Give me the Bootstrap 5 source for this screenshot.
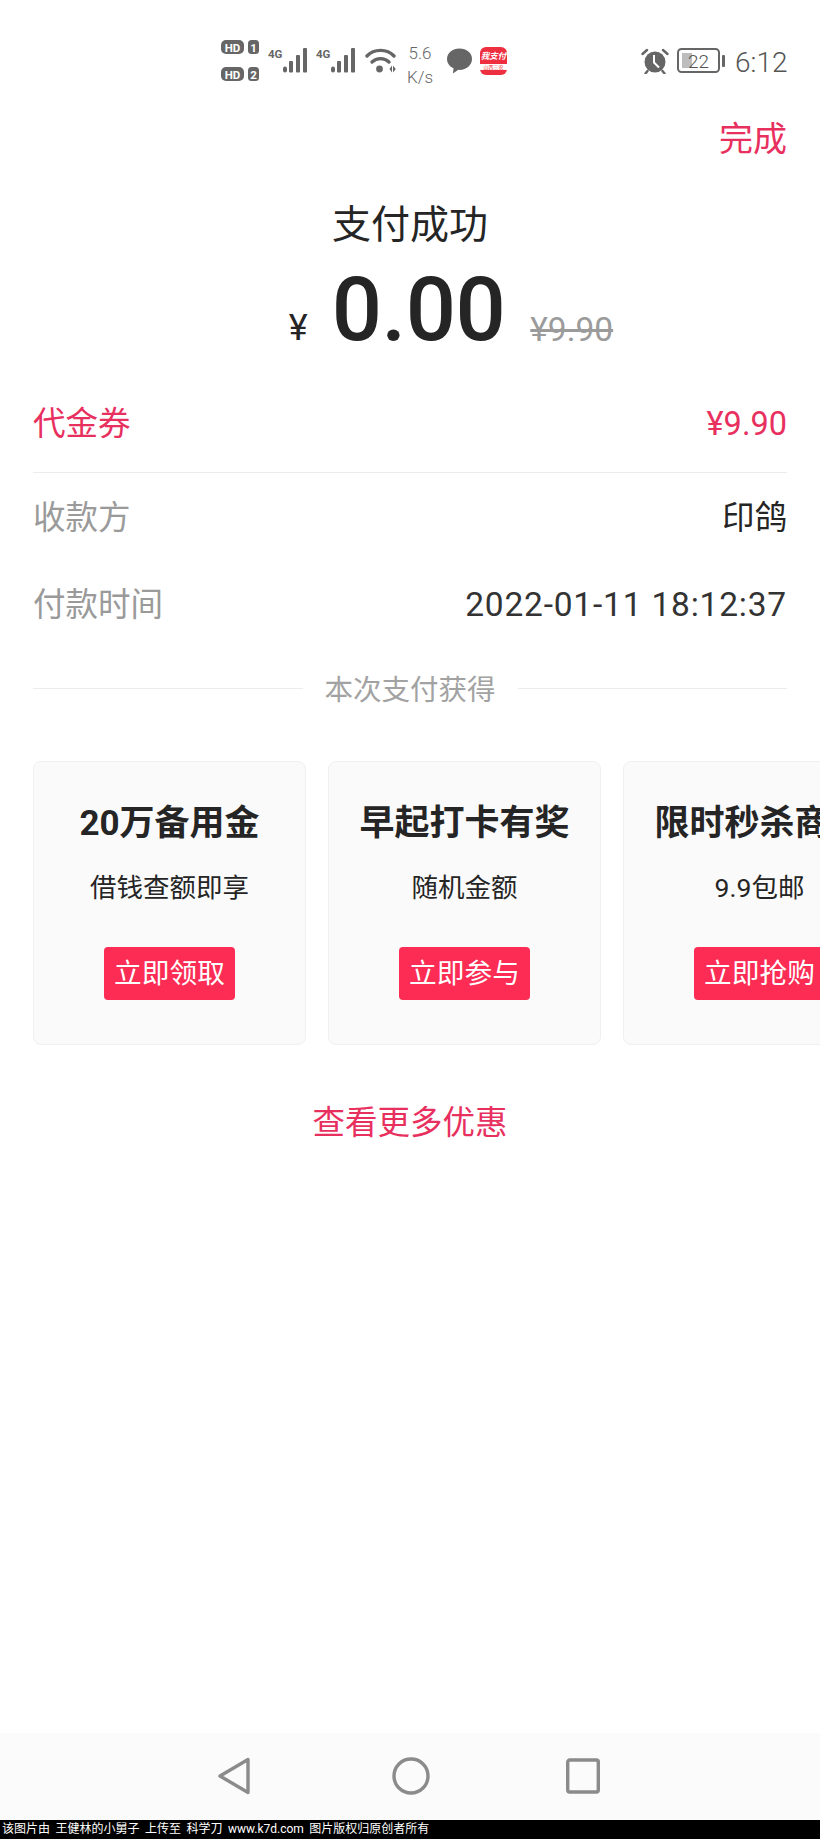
<!DOCTYPE html>
<html lang="zh-CN">
<head>
  <meta charset="UTF-8" />
  <meta name="viewport" content="width=device-width, initial-scale=1.0"/>
  <title>支付成功</title>
  <link href="https://cdn.jsdelivr.net/npm/bootstrap@5.3.3/dist/css/bootstrap.min.css" rel="stylesheet" />
  <style>
    body {
      width: 820px;
      height: 1839px;
      overflow: hidden;
      background: #fff;
      color: #252525;
      font-family: "Roboto", "Noto Sans CJK SC", sans-serif;
    }
    .screen { height: 1839px; }

    .status-bar { height: 100px; padding: 40px 33px 0 221px; color: #666; }
    .hd-stack { width: 38px; row-gap: 12px; }
    .net-icon { margin-top: 7px; }
    .net-first { margin-left: 9px; }
    .net-second { margin-left: 7px; }
    .wifi-icon { margin: 8px 0 0 8px; }
    .speed { width: 32px; margin: 1px 0 0 8px; font-size: 17px; line-height: 24px; text-align: center; font-weight: 300; white-space: nowrap; }
    .bubble-icon { margin: 8px 0 0 11px; }
    .app-icon { width: 27px; height: 28px; margin: 7px 0 0 8px; border-radius: 6px; background: #ee2f3f; color: #fff; overflow: hidden; }
    .app-name { font-size: 8.5px; line-height: 10px; font-style: italic; font-weight: 700; margin-top: 4px; white-space: nowrap; }
    .app-sub { font-size: 5px; line-height: 6px; margin-top: 3px; padding: 0 3px; background: #fff; color: #e33; white-space: nowrap; }
    .alarm-icon { margin-top: 8px; }
    .battery-icon { margin: 8px 0 0 8px; }
    .clock-time { font-size: 28px; line-height: 28px; width: 52px; margin: 9px 0 0 10px; font-weight: 300; color: #555; text-align: right; white-space: nowrap; }

    .done-link { color: #e8305f; font-size: 34px; line-height: 44px; padding: 17px 33px 0 0; text-align: right; }
    .pay-title { font-size: 39px; line-height: 50px; margin-top: 39px; text-align: center; }
    .amount-row { height: 92px; margin-top: 14px; padding-left: 82px; }
    .yen { font-size: 36px; line-height: 1; margin: 0 24px 10px 0; }
    .amount { font-size: 88.500px; line-height: 92px; font-weight: 500; letter-spacing: -.5px; }
    .old-price { font-size: 33.500px; line-height: 1; color: #9b9b9b; margin: 0 0 10px 25px; text-decoration: line-through; text-decoration-thickness: 3px; }

    .info-area { padding: 0 33px; margin-top: 35px; }
    .info-row { font-size: 32.500px; line-height: 44px; }
    .coupon-row { color: #e8305f; padding: 11px 0 26px; border-bottom: 1px solid #ececec; }
    .payee-row { padding-top: 23px; }
    .time-row { padding-top: 43px; }
    .info-label { color: #9a9a9a; }
    .time-value { font-size: 33.500px; letter-spacing: .8px; color: #333; }

    .gain-title { margin-top: 46px; font-size: 28.500px; line-height: 36px; color: #a2a2a2; column-gap: 22px; }
    .gain-line { flex: 1; height: 1px; margin-bottom: 6px; background: #ececec; }

    .offer-strip { margin-top: 52px; padding-left: 33px; column-gap: 22px; overflow: hidden; }
    .offer { flex: 0 0 273px; height: 284px; padding-top: 40px; background: #fafafa; border: 1px solid #f0f0f0; border-radius: 8px; text-align: center; white-space: nowrap; }
    .offer-name { font-size: 35px; line-height: 44px; font-weight: 700; }
    .offer-note { font-size: 26.500px; line-height: 36px; margin-top: 24px; }
    .offer-btn { width: 131px; height: 53px; margin-top: 41px; padding: 0; background: #fd2c55; border: 0; border-radius: 4px; color: #fff; font-size: 27.700px; line-height: 50px; white-space: nowrap; }

    .more-link { color: #e8305f; font-size: 32.500px; line-height: 44px; margin-top: 56px; text-align: center; }

    .nav-keys { height: 87px; background: #fbfbfb; padding-top: 24px; column-gap: 136px; }
    .back-key { margin: 0 3px 0 -3px; }
    .watermark { height: 19px; background: #000; color: #fff; font-size: 12px; line-height: 19px; padding-left: 2px; word-spacing: 2.500px; white-space: nowrap; }
  </style>
</head>
<body>
  <div class="screen d-flex flex-column">
    <div class="status-bar d-flex align-items-start">
      <div class="hd-stack d-flex flex-column">
        <svg width="38" height="15" viewBox="0 0 38 15"><rect width="23" height="14" rx="5" fill="#666"/><text x="11.500" y="11.500" font-size="11.500" font-weight="700" fill="#fff" text-anchor="middle" font-family="Roboto">HD</text><rect x="27" width="11" height="14" rx="3.500" fill="#666"/><text x="32.500" y="11.500" font-size="11.500" font-weight="700" fill="#fff" text-anchor="middle" font-family="Roboto">1</text></svg>
        <svg width="38" height="15" viewBox="0 0 38 15"><rect width="23" height="14" rx="5" fill="#666"/><text x="11.500" y="11.500" font-size="11.500" font-weight="700" fill="#fff" text-anchor="middle" font-family="Roboto">HD</text><rect x="27" width="11" height="14" rx="3.500" fill="#666"/><text x="32.500" y="11.500" font-size="11.500" font-weight="700" fill="#fff" text-anchor="middle" font-family="Roboto">2</text></svg>
      </div>
      <svg class="net-icon net-first" width="41" height="27" viewBox="0 0 41 27"><text x="0" y="11" font-size="11.500" font-weight="700" fill="#666" font-family="Roboto">4G</text><g fill="#666"><rect x="15" y="19.500" width="4" height="6" rx="2"/><rect x="21" y="14" width="4" height="11.500" rx="1"/><rect x="28" y="8" width="4" height="17.500" rx="1"/><rect x="35" y="1" width="4" height="24.500" rx="1"/></g></svg>
      <svg class="net-icon net-second" width="41" height="27" viewBox="0 0 41 27"><text x="0" y="11" font-size="11.500" font-weight="700" fill="#666" font-family="Roboto">4G</text><g fill="#666"><rect x="15" y="19.500" width="4" height="6" rx="2"/><rect x="21" y="14" width="4" height="11.500" rx="1"/><rect x="28" y="8" width="4" height="17.500" rx="1"/><rect x="35" y="1" width="4" height="24.500" rx="1"/></g></svg>
      <svg class="wifi-icon" width="31" height="26" viewBox="0 0 31 26"><g fill="none" stroke="#666" stroke-width="3.400" stroke-linecap="round"><path d="M2 8C9 .5 22 .5 29 8"/><path d="M7 14c4.500-4.500 12.500-4.500 17 0"/></g><circle cx="14.500" cy="21" r="3.400" fill="#666"/><path d="M24.500 21l2.500-3.500v7zM28 17.500l2.800 3.500-2.800 3.500z" fill="#666"/></svg>
      <div class="speed">5.6<br>K/s</div>
      <svg class="bubble-icon" width="25" height="26" viewBox="0 0 25 26"><path d="M12.500 .5C5.500 .5 0 5 0 11c0 4.200 2.700 7.600 6.500 9.300L6 25.500l5.300-3.700c.4 0 .8 .1 1.200 .1C19.500 21.900 25 17 25 11S19.500 .5 12.500 .5z" fill="#666"/></svg>
      <div class="app-icon d-flex flex-column align-items-center"><span class="app-name">我支付</span><span class="app-sub">山西三农</span></div>
      <svg class="alarm-icon ms-auto" width="28" height="26" viewBox="0 0 28 26"><circle cx="14" cy="14" r="10.500" fill="#666"/><path d="M13 7v7.500l5 5" fill="none" stroke="#fff" stroke-width="2"/><path d="M1.500 6L6 2M26.500 6L22 2M6.500 23l-2 2.500M21.500 23l2 2.500" stroke="#666" stroke-width="2.400" stroke-linecap="round"/></svg>
      <svg class="battery-icon" width="48" height="26" viewBox="0 0 48 26"><rect x="1" y="1" width="41" height="23" rx="3.500" fill="none" stroke="#666" stroke-width="2"/><rect x="5" y="5" width="10" height="15" fill="#bdbdbd"/><rect x="45" y="7" width="3" height="12" rx="1" fill="#666"/><text x="21.500" y="19.500" font-size="19" font-weight="300" fill="#555" text-anchor="middle" font-family="Roboto">22</text></svg>
      <div class="clock-time">6:12</div>
    </div>

    <div class="done-link">完成</div>
    <div class="pay-title">支付成功</div>
    <div class="amount-row d-flex justify-content-center align-items-end">
      <span class="yen">¥</span>
      <span class="amount">0.00</span>
      <span class="old-price">¥9.90</span>
    </div>

    <div class="info-area">
      <div class="info-row coupon-row d-flex justify-content-between"><span>代金券</span><span>¥9.90</span></div>
      <div class="info-row payee-row d-flex justify-content-between"><span class="info-label">收款方</span><span>印鸽</span></div>
      <div class="info-row time-row d-flex justify-content-between"><span class="info-label">付款时间</span><span class="time-value">2022-01-11 18:12:37</span></div>
      <div class="gain-title d-flex align-items-center"><span class="gain-line"></span><span>本次支付获得</span><span class="gain-line"></span></div>
    </div>

    <div class="offer-strip d-flex">
      <div class="offer">
        <div class="offer-name">20万备用金</div>
        <div class="offer-note">借钱查额即享</div>
        <button type="button" class="btn offer-btn">立即领取</button>
      </div>
      <div class="offer">
        <div class="offer-name">早起打卡有奖</div>
        <div class="offer-note">随机金额</div>
        <button type="button" class="btn offer-btn">立即参与</button>
      </div>
      <div class="offer">
        <div class="offer-name">限时秒杀商品</div>
        <div class="offer-note">9.9包邮</div>
        <button type="button" class="btn offer-btn">立即抢购</button>
      </div>
    </div>

    <div class="more-link">查看更多优惠</div>

    <div class="flex-grow-1"></div>

    <div class="nav-keys d-flex justify-content-center">
      <svg class="back-key" width="36" height="38" viewBox="0 0 36 38"><path d="M31 2.500v33L3 19z" fill="none" stroke="#8b8b8b" stroke-width="3.400" stroke-linejoin="round"/></svg>
      <svg width="38" height="38" viewBox="0 0 38 38"><circle cx="19" cy="19" r="17" fill="none" stroke="#8b8b8b" stroke-width="3.400"/></svg>
      <svg width="34" height="38" viewBox="0 0 34 38"><rect x="1.700" y="3" width="30.600" height="32" rx="2" fill="none" stroke="#8b8b8b" stroke-width="3.400"/></svg>
    </div>
    <div class="watermark">该图片由 王健林的小舅子 上传至 科学刀 www.k7d.com 图片版权归原创者所有</div>
  </div>
  <script src="https://cdn.jsdelivr.net/npm/bootstrap@5.3.3/dist/js/bootstrap.bundle.min.js"></script>
</body>
</html>
